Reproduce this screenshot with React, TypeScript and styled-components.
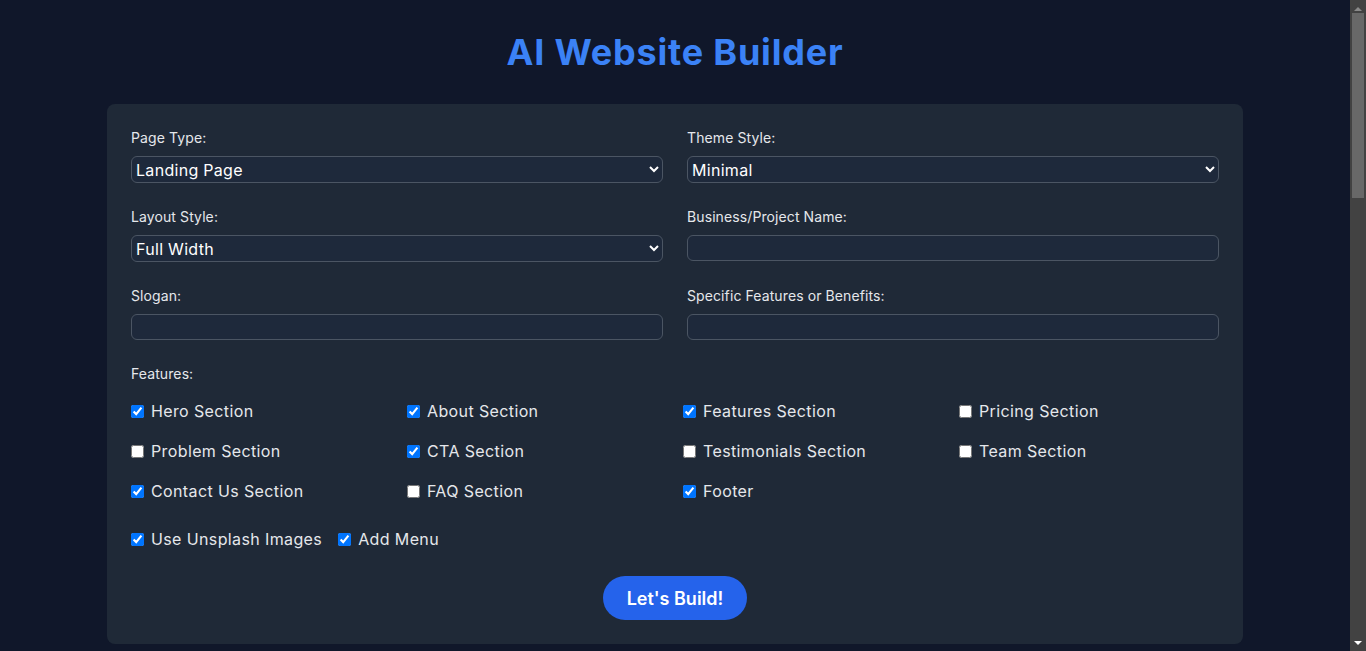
import React from "react";
import styled, { createGlobalStyle } from "styled-components";

const GlobalStyle = createGlobalStyle`
  html { color-scheme: dark; }
  body {
    margin: 0;
    background: #10172a;
    font-family: Inter, "Noto Sans", sans-serif;
    color: #e5e7eb;
  }
  * { box-sizing: border-box; }
`;

const Page = styled.div`
  width: calc(100% - 16px);
  padding: 32px 0 32px;
  display: flex;
  flex-direction: column;
  align-items: center;
`;

const Title = styled.h1`
  margin: 0 0 32px;
  font-size: 36px;
  line-height: 40px;
  font-weight: 700;
  letter-spacing: 0.8px;
  color: #3b82f6;
  text-align: center;
`;

const Card = styled.form`
  width: 1136px;
  background: #1f2937;
  border-radius: 8px;
  padding: 24px;
  display: flex;
  flex-direction: column;
`;

const FieldGrid = styled.div`
  display: grid;
  grid-template-columns: 1fr 1fr;
  column-gap: 24px;
  row-gap: 24px;
`;

const Field = styled.div`
  display: flex;
  flex-direction: column;
`;

const Label = styled.label<{ $mb?: number }>`
  font-size: 14px;
  line-height: 20px;
  font-weight: 400;
  letter-spacing: 0.1px;
  color: #e5e7eb;
  margin-bottom: ${(p) => p.$mb ?? 8}px;
`;

const Select = styled.select`
  height: 27px;
  padding: 0;
  background: #1e293b;
  color: #ffffff;
  border: 1px solid #4b5563;
  border-radius: 6px;
  font-family: inherit;
  font-size: 16px;
  letter-spacing: 0.3px;
  outline: none;
`;

const Input = styled.input`
  height: 26px;
  padding: 0 4px;
  background: #1e293b;
  color: #ffffff;
  border: 1px solid #4b5563;
  border-radius: 6px;
  font-family: inherit;
  font-size: 16px;
  outline: none;
`;

const Features = styled.div`
  margin-top: 24px;
  display: flex;
  flex-direction: column;
`;

const CheckGrid = styled.div`
  display: grid;
  grid-template-columns: repeat(4, 1fr);
  column-gap: 16px;
  row-gap: 16px;
`;

const CheckRow = styled.div`
  margin-top: 24px;
  display: flex;
  gap: 16px;
`;

const CheckLabel = styled.label`
  display: flex;
  align-items: center;
  height: 24px;
  font-size: 16px;
  letter-spacing: 0.38px;
  color: #e5e7eb;
  cursor: pointer;
`;

const Box = styled.input`
  color-scheme: light;
  width: 13px;
  height: 13px;
  margin: 0 7px 0 0;
  accent-color: #0075ff;
`;

const ButtonRow = styled.div`
  margin-top: 25px;
  display: flex;
  justify-content: center;
`;

const BuildButton = styled.button`
  height: 44px;
  padding: 0 24px;
  border: none;
  border-radius: 9999px;
  background: #2563eb;
  color: #ffffff;
  font-family: inherit;
  font-size: 18px;
  font-weight: 600;
  cursor: pointer;
`;

const Output = styled.section`
  width: 1136px;
  height: 1463px;
  margin-top: 32px;
`;

/* Drawn stand-in for the browser's dark scrollbar, overlaid on the right edge */
const ScrollTrack = styled.div`
  position: fixed;
  top: 0;
  right: 0;
  bottom: 0;
  width: 16px;
  background: #424242;
  display: flex;
  flex-direction: column;
  align-items: center;
`;

const Arrow = styled.div<{ $down?: boolean; $dim?: boolean }>`
  height: 17px;
  width: 100%;
  display: flex;
  align-items: center;
  justify-content: center;
  &::before {
    content: "";
    width: 0;
    height: 0;
    border-left: 4px solid transparent;
    border-right: 4px solid transparent;
    ${(p) =>
      p.$down
        ? `border-top: 4px solid ${p.$dim ? "#8a8a8a" : "#ffffff"};`
        : `border-bottom: 4px solid ${p.$dim ? "#8a8a8a" : "#ffffff"};`}
  }
`;

const Thumb = styled.div`
  width: 12px;
  height: 185px;
  margin-top: -4px;
  background: #686868;
`;

const Spacer = styled.div`
  flex: 1;
`;

const features: [string, boolean][] = [
  ["Hero Section", true],
  ["About Section", true],
  ["Features Section", true],
  ["Pricing Section", false],
  ["Problem Section", false],
  ["CTA Section", true],
  ["Testimonials Section", false],
  ["Team Section", false],
  ["Contact Us Section", true],
  ["FAQ Section", false],
  ["Footer", true],
];

function Check({ label, checked }: { label: string; checked: boolean }) {
  return (
    <CheckLabel>
      <Box type="checkbox" defaultChecked={checked} />
      {label}
    </CheckLabel>
  );
}

export default function App() {
  return (
    <>
      <GlobalStyle />
      <Page>
        <Title>AI Website Builder</Title>
        <Card onSubmit={(e) => e.preventDefault()}>
          <FieldGrid>
            <Field>
              <Label>Page Type:</Label>
              <Select defaultValue="Landing Page">
                <option>Landing Page</option>
                <option>Portfolio</option>
                <option>Blog</option>
              </Select>
            </Field>
            <Field>
              <Label>Theme Style:</Label>
              <Select defaultValue="Minimal">
                <option>Minimal</option>
                <option>Modern</option>
                <option>Classic</option>
              </Select>
            </Field>
            <Field>
              <Label>Layout Style:</Label>
              <Select defaultValue="Full Width">
                <option>Full Width</option>
                <option>Boxed</option>
              </Select>
            </Field>
            <Field>
              <Label>Business/Project Name:</Label>
              <Input type="text" />
            </Field>
            <Field>
              <Label>Slogan:</Label>
              <Input type="text" />
            </Field>
            <Field>
              <Label>Specific Features or Benefits:</Label>
              <Input type="text" />
            </Field>
          </FieldGrid>
          <Features>
            <Label $mb={15}>Features:</Label>
            <CheckGrid>
              {features.map(([l, c]) => (
                <Check key={l} label={l} checked={c} />
              ))}
            </CheckGrid>
          </Features>
          <CheckRow>
            <Check label="Use Unsplash Images" checked />
            <Check label="Add Menu" checked />
          </CheckRow>
          <ButtonRow>
            <BuildButton type="submit">Let's Build!</BuildButton>
          </ButtonRow>
        </Card>
        <Output />
      </Page>
      <ScrollTrack aria-hidden>
        <Arrow $dim />
        <Thumb />
        <Spacer />
        <Arrow $down />
      </ScrollTrack>
    </>
  );
}
